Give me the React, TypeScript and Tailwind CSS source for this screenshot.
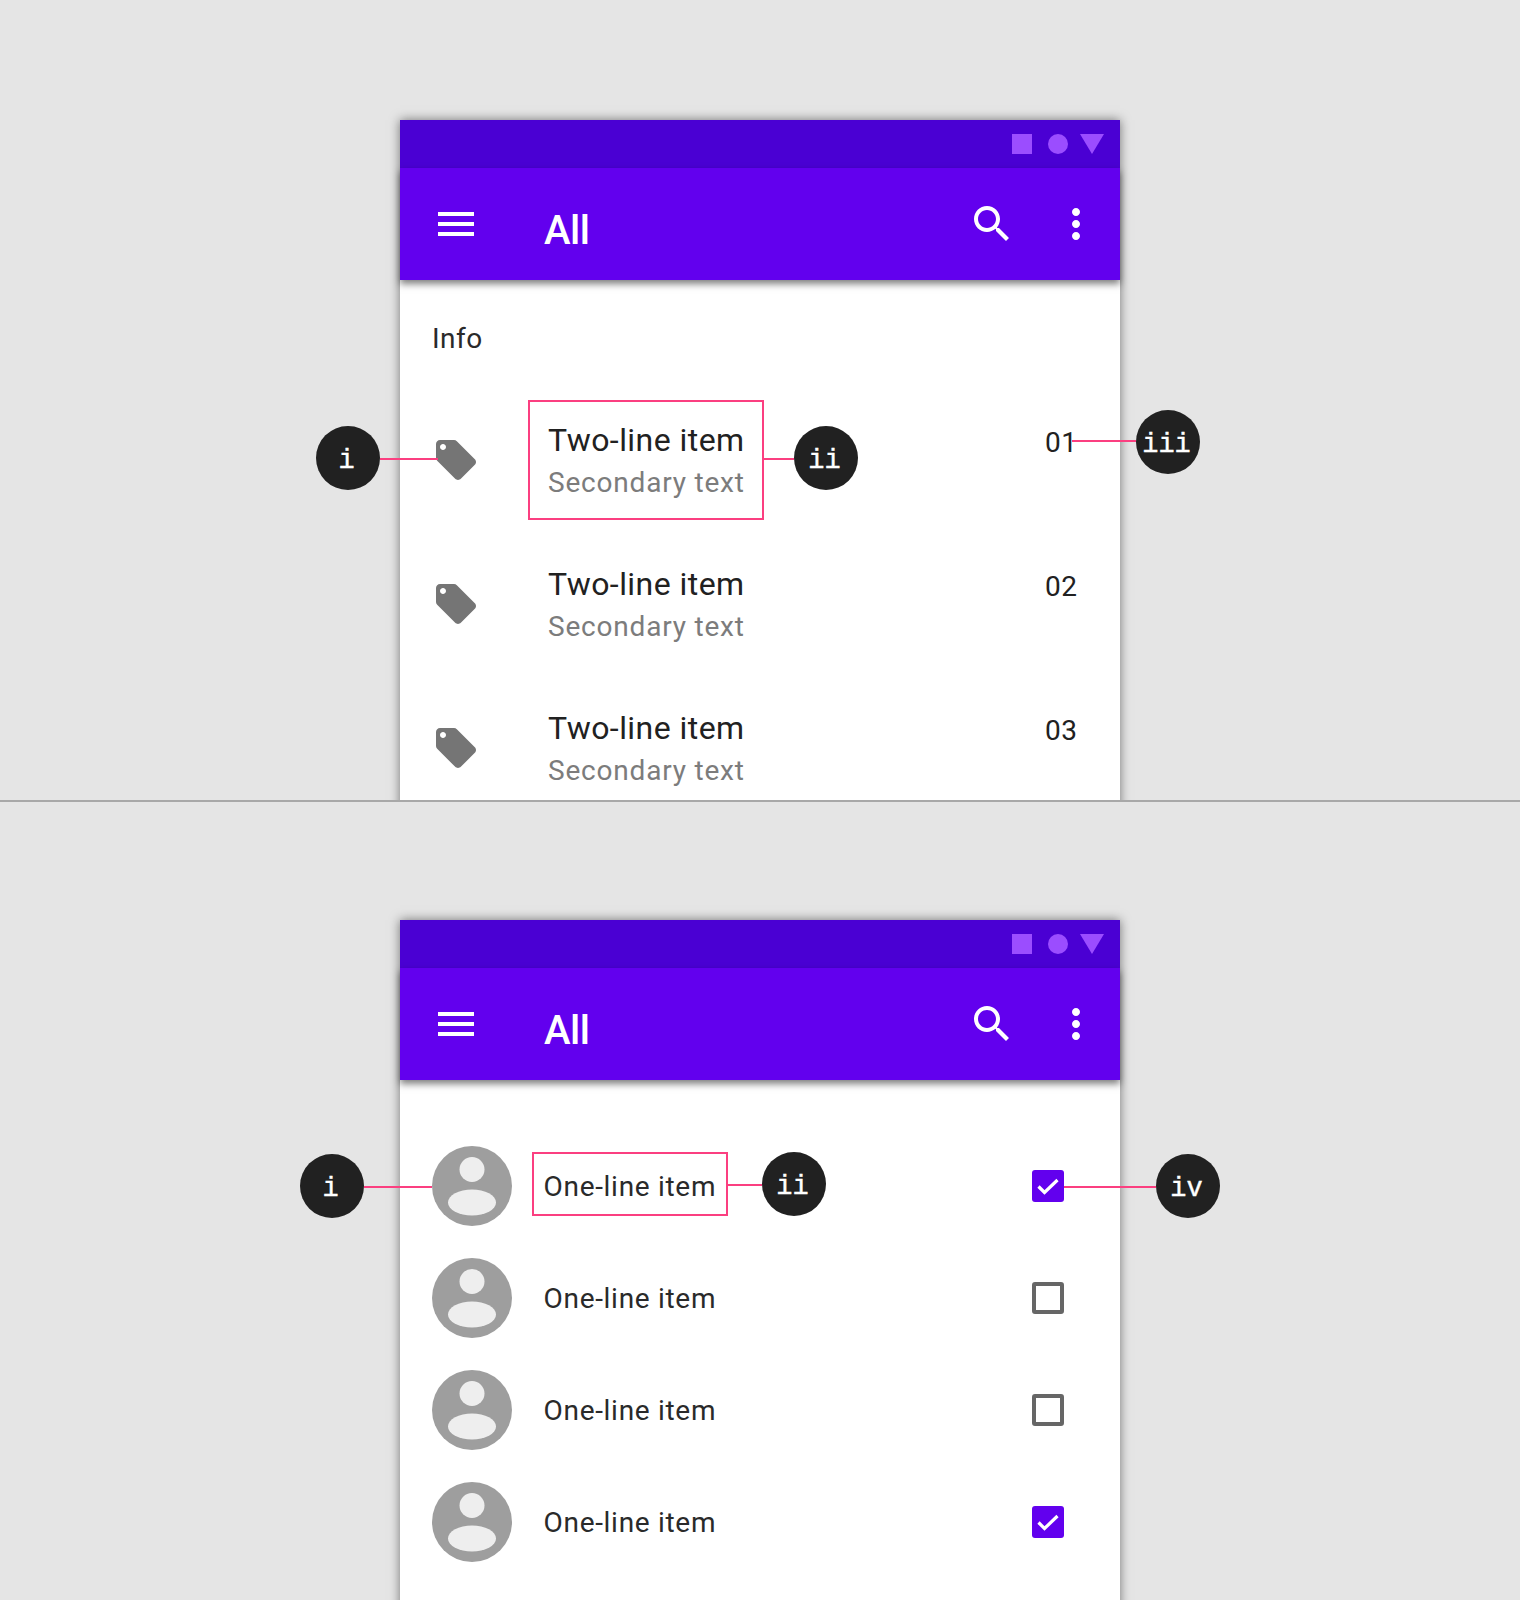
import React from "react";

const PINK = "bg-[#fb3f80]";

function Dot({ label }: { label: string }) {
  return (
    <div className="w-[64px] h-[64px] rounded-full bg-[#212121] text-white flex items-center justify-center pt-[6px] pr-[3px] text-[27px] leading-none [-webkit-text-stroke:0.4px_white] font-['Liberation_Mono',monospace]">
      {label}
    </div>
  );
}

function Callout({ label, line, className }: { label: string; line: string; className: string }) {
  return (
    <div className={`absolute z-10 ${className}`}>
      <div className={`absolute h-[2px] ${PINK} ${line}`} />
      <Dot label={label} />
    </div>
  );
}

function Icon({ d, className }: { d: string; className: string }) {
  return (
    <svg viewBox="0 0 24 24" className={`w-[48px] h-[48px] shrink-0 ${className}`} fill="currentColor">
      <path d={d} />
    </svg>
  );
}

function Bars() {
  return (
    <div>
      <div className="h-[48px] bg-[#4a00d3] flex items-center justify-end pr-[16px] gap-[16px]">
        <div className="w-[20px] h-[20px] bg-[#9b4dff]" />
        <div className="w-[20px] h-[20px] rounded-full bg-[#9b4dff] mr-[-4px]" />
        <svg viewBox="0 0 24 20" className="w-[24px] h-[20px] text-[#9b4dff]" fill="currentColor">
          <path d="M0 0h24L12 20z" />
        </svg>
      </div>
      <div className="h-[112px] bg-[#6200ee] text-white flex items-start pt-[32px] pl-[32px] pr-[20px] relative z-[1] shadow-[0_4px_7px_rgba(0,0,0,0.5)]">
        <Icon className="" d="M3 18h18v-2H3v2zm0-5h18v-2H3v2zm0-7v2h18V6H3z" />
        <div className="ml-[64px] mt-[7px] text-[40px] leading-[48px] tracking-[-0.5px] font-medium font-['Roboto',sans-serif]">All</div>
        <Icon className="ml-auto" d="M15.5 14h-.79l-.28-.27C15.41 12.59 16 11.11 16 9.5 16 5.91 13.09 3 9.5 3S3 5.91 3 9.5 5.91 16 9.5 16c1.61 0 3.09-.59 4.23-1.57l.27.28v.79l5 4.99L20.49 19l-4.99-5zm-6 0C7.01 14 5 11.99 5 9.5S7.01 5 9.5 5 14 7.01 14 9.5 11.99 14 9.5 14z" />
        <Icon className="ml-[36px]" d="M12 8c1.1 0 2-.9 2-2s-.9-2-2-2-2 .9-2 2 .9 2 2 2zm0 2c-1.1 0-2 .9-2 2s.9 2 2 2 2-.9 2-2-.9-2-2-2zm0 6c-1.1 0-2 .9-2 2s.9 2 2 2 2-.9 2-2-.9-2-2-2z" />
      </div>
    </div>
  );
}

function Phone({ children }: { children: React.ReactNode }) {
  return (
    <div className="relative w-[720px] h-[2000px] bg-white shadow-[0_0_10px_rgba(0,0,0,0.5)]">
      <Bars />
      {children}
    </div>
  );
}

const TAG =
  "M21.41 11.58l-9-9C12.05 2.22 11.55 2 11 2H4c-1.1 0-2 .9-2 2v7c0 .55.22 1.05.59 1.42l9 9c.36.36.86.58 1.41.58.55 0 1.05-.22 1.41-.59l7-7c.37-.36.59-.86.59-1.41 0-.55-.23-1.06-.59-1.42zM5.5 7C4.67 7 4 6.33 4 5.5S4.67 4 5.5 4 7 4.67 7 5.5 6.33 7 5.5 7z";

function TwoLine({ n, boxed }: { n: string; boxed?: boolean }) {
  return (
    <div className="h-[144px] pl-[32px] flex items-center">
      <Icon d={TAG} className="text-[#757575]" />
      <div
        className={`ml-[48px] w-[236px] h-[120px] border-2 pl-[18px] pt-[2px] flex flex-col justify-center ${boxed ? "border-[#fb3f80]" : "border-transparent"}`}
      >
        <div className="text-[32px] leading-[42px] text-[#212121] tracking-[0.45px] whitespace-nowrap">Two-line item</div>
        <div className="text-[28px] leading-[43px] text-[#7c7c7c] tracking-[0.8px] whitespace-nowrap">Secondary text</div>
      </div>
      <div className="ml-[281px] self-start mt-[37px] text-[28px] leading-[36px] text-[#212121] tracking-[0.5px]">{n}</div>
    </div>
  );
}

function Avatar() {
  return (
    <svg viewBox="0 0 80 80" className="w-[80px] h-[80px] shrink-0">
      <circle cx="40" cy="40" r="40" fill="#9e9e9e" />
      <circle cx="40" cy="23.5" r="12.5" fill="#eeeeee" />
      <ellipse cx="40" cy="56.5" rx="24" ry="13" fill="#eeeeee" />
    </svg>
  );
}

function OneLine({ checked, boxed }: { checked: boolean; boxed?: boolean }) {
  return (
    <div className="h-[112px] pl-[32px] flex items-center">
      <Avatar />
      <div
        className={`ml-[20px] w-[196px] h-[64px] border-2 pl-[9.5px] flex items-center text-[28px] text-[#2a2a2a] tracking-[0.7px] whitespace-nowrap ${boxed ? "border-[#fb3f80] mb-[4px] pt-[6px]" : "border-transparent pt-[2px]"}`}
      >
        One-line item
      </div>
      {checked ? (
        <div className="ml-[304px] w-[32px] h-[32px] rounded-[3px] bg-[#6200ee] flex items-center justify-center">
          <svg viewBox="0 0 24 24" className="w-[24px] h-[24px]" fill="none" stroke="white" strokeWidth="3.2">
            <path d="M2.5 12.5l6 6L21.5 6" />
          </svg>
        </div>
      ) : (
        <div className="ml-[304px] w-[32px] h-[32px] rounded-[3px] border-[4px] border-[#666666]" />
      )}
    </div>
  );
}

export default function App() {
  return (
    <div className="w-[1520px] h-[1600px] overflow-hidden bg-[#e5e5e5] font-['Roboto',sans-serif]">
      <section className="relative h-[802px] overflow-hidden border-b-2 border-[#a8a8a8] pt-[120px] flex justify-center">
        <Phone>
          <div className="h-[108px] pl-[32px] pt-[41px] text-[28px] leading-[36px] text-[#2a2a2a] tracking-[0.5px]">Info</div>
          <TwoLine n="01" boxed />
          <TwoLine n="02" />
          <TwoLine n="03" />
          <Callout label="i" className="left-[-84px] top-[306px]" line="left-[64px] top-[32px] w-[58px]" />
          <Callout label="ii" className="left-[394px] top-[306px]" line="left-[-30px] top-[32px] w-[30px]" />
          <Callout label="iii" className="left-[736px] top-[290px]" line="left-[-64px] top-[30px] w-[64px]" />
        </Phone>
      </section>
      <section className="relative h-[798px] overflow-hidden pt-[118px] flex justify-center">
        <Phone>
          <div className="pt-[50px]">
            <OneLine checked boxed />
            <OneLine checked={false} />
            <OneLine checked={false} />
            <OneLine checked />
          </div>
          <Callout label="i" className="left-[-100px] top-[234px]" line="left-[64px] top-[32px] w-[68px]" />
          <Callout label="ii" className="left-[362px] top-[232px]" line="left-[-34px] top-[32px] w-[34px]" />
          <Callout label="iv" className="left-[756px] top-[234px]" line="left-[-92px] top-[32px] w-[92px]" />
        </Phone>
      </section>
    </div>
  );
}
